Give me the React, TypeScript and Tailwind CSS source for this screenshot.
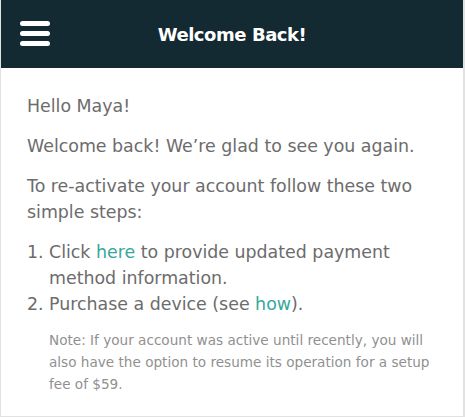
export default function App() {
  return (
    <div className="min-h-[417px] w-[465px] bg-white border-x border-b border-[#e2e2e2] border-r-2 font-['DejaVu_Sans',sans-serif]">
      {/* Top bar */}
      <header className="relative h-[68px] bg-[#132a33] flex items-center justify-center">
        <button className="absolute left-[19px] top-[21px] flex flex-col gap-[5px]">
          <span className="block h-[5px] w-[30px] rounded-full bg-white" />
          <span className="block h-[5px] w-[30px] rounded-full bg-white" />
          <span className="block h-[5px] w-[30px] rounded-full bg-white" />
        </button>
        <h1 className="text-[18px] font-bold text-white tracking-tight">Welcome Back!</h1>
      </header>

      <main className="px-[26px] pt-[25px] text-[17.4px] leading-[26px] text-[#6c6c6c]">
        <p>Hello Maya!</p>
        <p className="mt-[14px]">Welcome back! We’re glad to see you again.</p>
        <p className="mt-[14px]">To re-activate your account follow these two simple steps:</p>
        <ol className="mt-[14px] list-decimal pl-[22px]">
          <li>
            Click <a className="text-[#35a89c]">here</a> to provide updated payment method information.
          </li>
          <li>
            Purchase a device (see <a className="text-[#35a89c]">how</a>).
          </li>
        </ol>
        <p className="mt-[12px] pl-[22px] pr-[4px] text-[13.6px] leading-[22px] text-[#909090]">
          Note: If your account was active until recently, you will also have the option to resume its operation for a setup fee of $59.
        </p>
      </main>
    </div>
  )
}
